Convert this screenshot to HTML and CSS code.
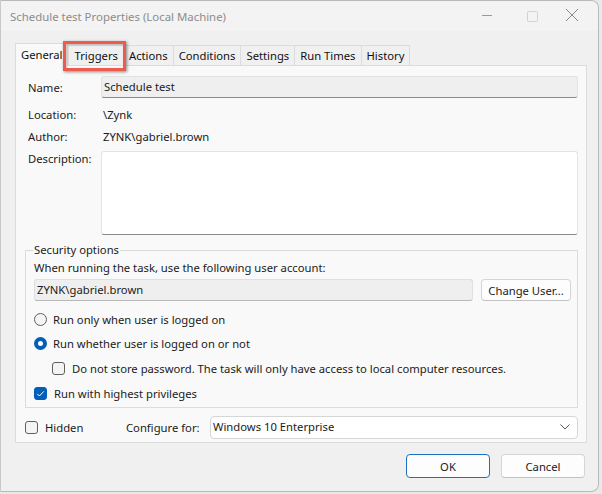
FILE: index.html
```html
<!DOCTYPE html>
<html>
<head>
<meta charset="utf-8">
<link rel="stylesheet" href="styles.css">
</head>
<body>
<div class="window">
  <div class="titlebar">
    <div class="title">Schedule test Properties (Local Machine)</div>
    <div class="controls">
      <svg class="ctl" width="46" height="30" viewBox="0 0 46 30"><line x1="22" y1="14.5" x2="32" y2="14.5" stroke="#9a9a9a" stroke-width="1"/></svg>
      <svg class="ctl" width="46" height="30" viewBox="0 0 46 30"><rect x="21.5" y="10.5" width="10" height="10" rx="1" fill="none" stroke="#d2d2d2" stroke-width="1"/></svg>
      <svg class="ctl" width="46" height="30" viewBox="0 0 46 30"><path d="M14 8 L26 20 M26 8 L14 20" stroke="#8a8a8a" stroke-width="1"/></svg>
    </div>
  </div>
  <div class="body">
    <div class="tabs">
      <div class="tab active">General</div>
      <div class="tab">Triggers</div>
      <div class="tab">Actions</div>
      <div class="tab">Conditions</div>
      <div class="tab">Settings</div>
      <div class="tab">Run Times</div>
      <div class="tab">History</div>
      <div class="highlight"></div>
    </div>
    <div class="panel">
      <div class="row row-name">
        <div class="label">Name:</div>
        <div class="field name-field">Schedule test</div>
      </div>
      <div class="row row-text">
        <div class="label">Location:</div>
        <div class="value">\Zynk</div>
      </div>
      <div class="row row-text row-author">
        <div class="label">Author:</div>
        <div class="value">ZYNK\gabriel.brown</div>
      </div>
      <div class="row row-desc">
        <div class="label">Description:</div>
        <div class="textarea"></div>
      </div>
      <fieldset class="group">
        <legend>Security options</legend>
        <div class="g-text">When running the task, use the following user account:</div>
        <div class="user-row">
          <div class="field user-field">ZYNK\gabriel.brown</div>
          <div class="btn change">Change User...</div>
        </div>
        <div class="opt opt-first"><span class="radio"></span>Run only when user is logged on</div>
        <div class="opt"><span class="radio on"></span>Run whether user is logged on or not</div>
        <div class="opt opt-indent"><span class="check"></span>Do not store password. The task will only have access to local computer resources.</div>
        <div class="opt"><span class="check on"><svg width="13" height="13" viewBox="0 0 13 13"><path d="M3.2 6.8 L5.4 9 L9.8 4.4" fill="none" stroke="#fff" stroke-width="1"/></svg></span>Run with highest privileges</div>
      </fieldset>
      <div class="bottom-row">
        <div class="opt hidden-opt"><span class="check"></span>Hidden</div>
        <div class="cfg-label">Configure for:</div>
        <div class="select">Windows 10 Enterprise<svg class="chev" width="10" height="6" viewBox="0 0 10 6"><path d="M0.5 0.5 L5 5 L9.5 0.5" fill="none" stroke="#555" stroke-width="1"/></svg></div>
      </div>
    </div>
    <div class="buttons">
      <div class="btn ok">OK</div>
      <div class="btn">Cancel</div>
    </div>
  </div>
</div>
</body>
</html>
```
FILE: styles.css
```css
html, body {
  margin: 0;
  padding: 0;
}
body {
  background: #e9e9e9;
  width: 602px;
  height: 494px;
  overflow: hidden;
  font-family: "Noto Sans", "Open Sans", sans-serif;
  font-size: 11.25px;
  color: #1b1b1b;
}
.window {
  box-sizing: border-box;
  width: 599px;
  height: 492px;
  border: 1px solid #b9b9b9;
  border-left-color: #c9c9c9;
  border-radius: 0 8px 8px 0;
  background: #f0f0f0;
  overflow: hidden;
  display: flex;
  flex-direction: column;
}
.titlebar {
  height: 30px;
  background: #f3f3f3;
  display: flex;
  align-items: center;
  justify-content: space-between;
}
.title {
  padding-left: 9px;
  color: #8c8c8c;
  font-size: 11.4px;
  padding-top: 1px;
}
.controls {
  display: flex;
  align-self: flex-start;
}
.ctl { display: block; }
.body {
  flex: 1;
  padding: 12px 13px 0 13px;
  display: flex;
  flex-direction: column;
}
.tabs {
  position: relative;
  display: flex;
  align-items: flex-end;
  height: 22px;
  padding-left: 1px;
  z-index: 1;
}
.tab {
  box-sizing: border-box;
  height: 20px;
  padding: 0 5px;
  border: 1px solid #dcdcdc;
  border-bottom: none;
  margin-left: -1px;
  background: #f0f0f0;
  display: flex;
  align-items: center;
  color: #111;
}
.tab.active {
  height: 23px;
  margin-bottom: -1px;
  background: #f9f9f9;
  padding: 0 5px 2px 5px;
  margin-left: 0;
  margin-right: 1px;
}
.highlight {
  position: absolute;
  left: 49px;
  top: -2px;
  width: 63px;
  height: 30px;
  box-sizing: border-box;
  border: 3px solid #ef5a4e;
  box-shadow: 1px 1px 3px rgba(0,0,0,0.45), inset 1px 1px 2px rgba(0,0,0,0.25);
}
.panel {
  box-sizing: border-box;
  width: 572px;
  height: 378px;
  margin-left: 1px;
  border: 1px solid #dcdcdc;
  background: #f9f9f9;
  padding: 10px 8px 0 9px;
  display: flex;
  flex-direction: column;
}
.row {
  display: flex;
  align-items: center;
  padding-left: 3px;
}
.label {
  width: 73px;
  flex: none;
}
.row-name { height: 22px; }
.field {
  box-sizing: border-box;
  height: 22px;
  background: #efefef;
  border: 1px solid #e2e2e2;
  border-bottom: 1px solid #8a8a8a;
  border-radius: 3px;
  padding: 0 4px 1px 2px;
  display: flex;
  align-items: center;
}
.name-field { flex: 1; }
.row-text { height: 20px; margin-top: 6px; }
.row-author { margin-top: 2px; }
.value { padding-left: 2px; }
.row-desc {
  align-items: flex-start;
  margin-top: 5px;
}
.textarea {
  flex: 1;
  height: 84px;
  box-sizing: border-box;
  background: #fff;
  border: 1px solid #e4e4e4;
  border-bottom: 1px solid #8a8a8a;
  border-radius: 3px;
}
.group {
  margin: 7px 0 0 0;
  padding: 0 6px 0 8px;
  border: 1px solid #dcdcdc;
  height: 166px;
  box-sizing: border-box;
  min-width: 0;
}
.group legend {
  padding: 0 1px;
  margin-left: -1px;
  line-height: 16px;
}
.g-text { margin-top: 2px; line-height: 16px; }
.user-row {
  display: flex;
  align-items: center;
  margin-top: 3px;
  gap: 8px;
}
.user-field {
  width: 439px;
  background: #efefef;
  border-color: #dfdfdf;
  border-bottom-color: #b8b8b8;
  padding-left: 2px;
}
.btn {
  box-sizing: border-box;
  height: 22px;
  background: #fdfdfd;
  border: 1px solid #d5d5d5;
  border-bottom-color: #c2c2c2;
  border-radius: 4px;
  display: flex;
  align-items: center;
  justify-content: center;
}
.change { width: 90px; }
.opt {
  display: flex;
  align-items: center;
  height: 16px;
  margin-top: 8.5px;
}
.opt-first { margin-top: 10px; }
.opt-indent { padding-left: 18px; margin-top: 9px; }
.radio, .check {
  box-sizing: border-box;
  width: 13px;
  height: 13px;
  flex: none;
  margin-right: 6px;
  background: #f4f4f4;
  border: 1px solid #5f5f5f;
}
.radio { border-radius: 50%; }
.radio.on {
  background: #fff;
  border: 4px solid #005fb8;
}
.check { border-radius: 3px; margin-right: 7px; }
.check.on {
  background: #005fb8;
  border-color: #005fb8;
  position: relative;
}
.check.on svg { position: absolute; left: -1px; top: -1px; }
.bottom-row {
  display: flex;
  align-items: center;
  margin-top: 8px;
  height: 22px;
}
.hidden-opt { margin-top: 0; width: 101px; }
.cfg-label { width: 84px; flex: none; }
.select {
  flex: 1;
  box-sizing: border-box;
  height: 23px;
  background: #fff;
  border: 1px solid #d6d6d6;
  border-radius: 4px;
  display: flex;
  align-items: center;
  justify-content: space-between;
  padding: 0 7px 1px 2px;
}
.chev { display: block; }
.buttons {
  display: flex;
  justify-content: flex-end;
  gap: 11px;
  margin-top: 11px;
}
.buttons .btn {
  width: 84px;
  height: 24px;
}
.btn.ok { border: 1px solid #1f6fc0; }
```
